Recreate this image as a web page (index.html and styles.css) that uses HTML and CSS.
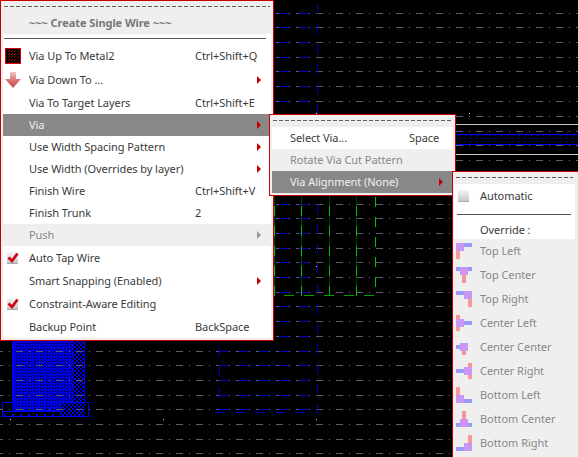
FILE: index.html
```html
<!DOCTYPE html>
<html lang="en">
<head>
<meta charset="utf-8">
<title>Create Single Wire menu</title>
<link rel="stylesheet" href="styles.css">
</head>
<body>
<svg class="canvas" width="578" height="457" viewBox="0 0 578 457" shape-rendering="crispEdges">
  <defs>
    <pattern id="dense" width="3" height="3" patternUnits="userSpaceOnUse">
      <rect width="3" height="3" fill="#0000e8"/>
      <rect x="1" y="1" width="1" height="1" fill="#000"/>
      <rect x="2" y="0" width="1" height="1" fill="#000060"/>
    </pattern>
    <pattern id="hatch" width="4" height="4" patternUnits="userSpaceOnUse">
      <rect width="4" height="4" fill="#000"/>
      <rect x="0" y="0" width="2" height="2" fill="#0000e0"/>
      <rect x="2" y="2" width="2" height="2" fill="#0000e0"/>
    </pattern>
    <pattern id="band" width="6" height="6" patternUnits="userSpaceOnUse">
      <rect width="6" height="6" fill="#000"/>
      <rect x="0" y="0" width="1" height="1" fill="#0000ff"/>
      <rect x="3" y="3" width="1" height="1" fill="#0000ff"/>
      <rect x="3" y="0" width="1" height="1" fill="#0000a0"/>
    </pattern>
  </defs>

  <!-- metal block, lower left -->
  <rect x="12" y="340" width="61" height="71" fill="url(#dense)"/>
  <rect x="73" y="340" width="12" height="62" fill="url(#hatch)"/>
  <rect x="60" y="402" width="25" height="15" fill="url(#hatch)"/>
  <path class="blue-solid" d="M12.500 340V402M13.500 340V402M84.500 340V402M60.500 340V417M3 402.500H88M3 416.500H88M2.500 402V417M88.500 402V417M3 411.500H60"/>
  <path class="blue-dots" d="M4 414.500H60"/>

  <!-- routing band, right -->
  <rect x="276" y="134" width="302" height="11" fill="url(#band)"/>
  <path class="band-edge" d="M276 134.500H578M276 144.500H578"/>
  <path class="band-rail" d="M276 124.500H578M276 154.500H578"/>

  <!-- grid -->
  <path class="grid-dash" d="M-4 13.500H578M-4 27.500H578M-4 42.500H578M-4 57.500H578M-4 71.500H578M-4 86.500H578M-4 101.500H578M-4 116.500H578M-4 131.500H578M-4 145.500H578M-4 160.500H578M-4 175.500H578M-4 189.500H578M-4 204.500H578M-4 218.500H578M-4 233.500H578M-4 248.500H578M-4 262.500H578M-4 277.500H578M-4 292.500H578M-4 306.500H578M-4 321.500H578M-4 336.500H578M-4 351.500H578M-4 365.500H578M-4 380.500H578M-4 395.500H578M-4 409.500H578M-4 424.500H578M-4 439.500H578M-4 453.500H578"/>
  <path class="grid-dot" d="M9 13.500H578M9 27.500H578M9 42.500H578M9 57.500H578M9 71.500H578M9 86.500H578M9 101.500H578M9 116.500H578M9 131.500H578M9 145.500H578M9 160.500H578M9 175.500H578M9 189.500H578M9 204.500H578M9 218.500H578M9 233.500H578M9 248.500H578M9 262.500H578M9 277.500H578M9 292.500H578M9 306.500H578M9 321.500H578M9 336.500H578M9 351.500H578M9 365.500H578M9 380.500H578M9 395.500H578M9 409.500H578M9 424.500H578M9 439.500H578M9 453.500H578"/>

  <!-- blue wires, upper and centre -->
  <path class="wire-h" d="M279 13.500H309M279 27.500H309M279 42.500H309M279 57.500H309M279 71.500H309M279 86.500H309M279 101.500H309M279 204.500H309M279 218.500H309M279 233.500H309M279 248.500H309M279 262.500H309M279 277.500H309M279 292.500H309M279 306.500H309M279 321.500H309M279 336.500H309"/>
  <path class="wire-v" d="M317.500 4V114M317.500 204V334"/>

  <!-- blue outline, lower centre -->
  <path class="wire-h" d="M219 351.500H309M219 365.500H309M219 380.500H309M219 395.500H309M219 409.500H309"/>
  <path class="wire-v" d="M219.500 347V412M317.500 344V412"/>
  <path class="wire-h" d="M215 412.500H317"/>

  <!-- green wires -->
  <path class="green-dim" d="M274.500 196V296M301.500 196V296M329.500 196V296M356.500 196V296"/>
  <path class="green" d="M274.500 206V296M301.500 206V296M329.500 206V296M356.500 206V296M375.500 197V287"/>
  <path class="green-thin" d="M284 295.500H374"/>

  <!-- markers -->
  <path class="marker" d="M10 419.500h1M163 419.500h1M316 419.500h1M316 113.500h1M469 113.500h1M316 266.500h1"/>
</svg>

<div class="menu menu-main">
  <div class="tear"></div>
  <div class="row row-title"><span class="label">~~~ Create Single Wire ~~~</span></div>
  <div class="sep-row"><div class="sep"></div></div>
  <div class="row row-ico">
    <span class="slot">
      <svg width="16" height="16" viewBox="0 0 16 16" shape-rendering="crispEdges">
        <defs><pattern id="viadots" width="3" height="3" patternUnits="userSpaceOnUse"><rect width="3" height="3" fill="#000"/><rect width="1" height="1" fill="#c00000"/><rect x="1" y="2" width="1" height="1" fill="#800000"/></pattern></defs>
        <rect width="16" height="16" fill="#e00000"/><rect x="1" y="1" width="14" height="14" fill="url(#viadots)"/>
      </svg>
    </span>
    <span class="label">Via Up To Metal2</span><span class="key">Ctrl+Shift+Q</span>
  </div>
  <div class="row row-ico">
    <span class="slot">
      <svg width="16" height="16" viewBox="0 0 16 16">
        <defs><linearGradient id="down" x1="0" y1="0" x2="0" y2="1"><stop offset="0" stop-color="#eec4c4"/><stop offset="0.6" stop-color="#d86a6a"/><stop offset="1" stop-color="#c85050"/></linearGradient></defs>
        <path d="M5 0H11V7H16L8 16L0 7H5Z" fill="url(#down)"/>
      </svg>
    </span>
    <span class="label">Via Down To ...</span><span class="key"></span><span class="arrow"></span>
  </div>
  <div class="row"><span class="slot"></span><span class="label">Via To Target Layers</span><span class="key">Ctrl+Shift+E</span></div>
  <div class="row row-active"><span class="slot"></span><span class="label">Via</span><span class="key"></span><span class="arrow"></span></div>
  <div class="row"><span class="slot"></span><span class="label">Use Width Spacing Pattern</span><span class="key"></span><span class="arrow"></span></div>
  <div class="row"><span class="slot"></span><span class="label">Use Width (Overrides by layer)</span><span class="key"></span><span class="arrow"></span></div>
  <div class="row"><span class="slot"></span><span class="label">Finish Wire</span><span class="key">Ctrl+Shift+V</span></div>
  <div class="row"><span class="slot"></span><span class="label">Finish Trunk</span><span class="key">2</span></div>
  <div class="row row-off"><span class="slot"></span><span class="label">Push</span><span class="key"></span><span class="arrow"></span></div>
  <div class="row row-ico">
    <span class="slot"><span class="check"><svg width="12" height="12" viewBox="0 0 12 12"><path d="M1.500 5.500L5 9L10.500 1.500" fill="none" stroke="#d00010" stroke-width="2.600"/></svg></span></span>
    <span class="label">Auto Tap Wire</span>
  </div>
  <div class="row"><span class="slot"></span><span class="label">Smart Snapping (Enabled)</span><span class="key"></span><span class="arrow"></span></div>
  <div class="row row-ico">
    <span class="slot"><span class="check"><svg width="12" height="12" viewBox="0 0 12 12"><path d="M1.500 5.500L5 9L10.500 1.500" fill="none" stroke="#d00010" stroke-width="2.600"/></svg></span></span>
    <span class="label">Constraint-Aware Editing</span>
  </div>
  <div class="row"><span class="slot"></span><span class="label">Backup Point</span><span class="key">BackSpace</span></div>
</div>

<div class="menu menu-via">
  <div class="tear"></div>
  <div class="row"><span class="label">Select Via...</span><span class="key">Space</span></div>
  <div class="row row-off"><span class="label">Rotate Via Cut Pattern</span></div>
  <div class="row row-active"><span class="label">Via Alignment (None)</span><span class="key"></span><span class="arrow"></span></div>
</div>

<div class="menu menu-align">
  <div class="tear"></div>
  <div class="panel">
    <div class="row row-auto"><span class="slot"><span class="check check-plain"></span></span><span class="label">Automatic</span></div>
    <div class="sep-row sep-row-tall"><div class="sep"></div></div>
    <div class="row row-override"><span class="slot"></span><span class="label">Override :</span></div>
  </div>
  <div class="row row-off"><span class="slot"><svg width="16" height="16" shape-rendering="crispEdges"><rect class="a-blue" x="8" y="0" width="8" height="4"/><rect class="a-red" x="0" y="8" width="4" height="8"/><rect class="a-pur" x="0" y="0" width="8" height="8"/></svg></span><span class="label">Top Left</span></div>
  <div class="row row-off"><span class="slot"><svg width="16" height="16" shape-rendering="crispEdges"><rect class="a-blue" x="0" y="0" width="16" height="4"/><rect class="a-red" x="6" y="8" width="4" height="8"/><rect class="a-pur" x="4" y="0" width="8" height="8"/></svg></span><span class="label">Top Center</span></div>
  <div class="row row-off"><span class="slot"><svg width="16" height="16" shape-rendering="crispEdges"><rect class="a-blue" x="0" y="0" width="8" height="4"/><rect class="a-red" x="12" y="8" width="4" height="8"/><rect class="a-pur" x="8" y="0" width="8" height="8"/></svg></span><span class="label">Top Right</span></div>
  <div class="row row-off"><span class="slot"><svg width="16" height="16" shape-rendering="crispEdges"><rect class="a-red" x="0" y="0" width="4" height="16"/><rect class="a-blue" x="8" y="6" width="8" height="4"/><rect class="a-pur" x="0" y="4" width="8" height="8"/></svg></span><span class="label">Center Left</span></div>
  <div class="row row-off"><span class="slot"><svg width="16" height="16" shape-rendering="crispEdges"><rect class="a-blue" x="0" y="6" width="4" height="4"/><rect class="a-red" x="6" y="12" width="4" height="4"/><rect class="a-pur" x="4" y="4" width="8" height="8"/></svg></span><span class="label">Center Center</span></div>
  <div class="row row-off"><span class="slot"><svg width="16" height="16" shape-rendering="crispEdges"><rect class="a-red" x="12" y="0" width="4" height="16"/><rect class="a-blue" x="0" y="6" width="8" height="4"/><rect class="a-pur" x="8" y="4" width="8" height="8"/></svg></span><span class="label">Center Right</span></div>
  <div class="row row-off"><span class="slot"><svg width="16" height="16" shape-rendering="crispEdges"><rect class="a-red" x="0" y="0" width="4" height="8"/><rect class="a-blue" x="8" y="12" width="8" height="4"/><rect class="a-pur" x="0" y="8" width="8" height="8"/></svg></span><span class="label">Bottom Left</span></div>
  <div class="row row-off"><span class="slot"><svg width="16" height="16" shape-rendering="crispEdges"><rect class="a-red" x="6" y="0" width="4" height="8"/><rect class="a-blue" x="0" y="12" width="16" height="4"/><rect class="a-pur" x="4" y="8" width="8" height="8"/></svg></span><span class="label">Bottom Center</span></div>
  <div class="row row-off"><span class="slot"><svg width="16" height="16" shape-rendering="crispEdges"><rect class="a-red" x="12" y="0" width="4" height="8"/><rect class="a-blue" x="0" y="12" width="8" height="4"/><rect class="a-pur" x="8" y="8" width="8" height="8"/></svg></span><span class="label">Bottom Right</span></div>
</div>
</body>
</html>
```

FILE: styles.css
```css
html, body {
  margin: 0;
  width: 578px;
  height: 457px;
  overflow: hidden;
  background: #000;
}

body {
  position: relative;
  font-family: "Noto Sans", "Open Sans", sans-serif;
  font-size: 11px;
  letter-spacing: -0.06px;
  color: #3a3a3a;
}

/* layout canvas */
.canvas {
  position: absolute;
  left: 0;
  top: 0;
  display: block;
}

.canvas path { fill: none; }

.grid-dash { stroke: #5a5a70; stroke-width: 1; stroke-dasharray: 7 13; }
.grid-dot { stroke: #777; stroke-width: 1; stroke-dasharray: 1 19; }
.wire-h { stroke: #0000c0; stroke-width: 1; stroke-dasharray: 10 10; }
.wire-v { stroke: #0000b0; stroke-width: 1; stroke-dasharray: 10 10; }
.blue-solid { stroke: #0000f8; stroke-width: 1; }
.blue-dots { stroke: #0000f0; stroke-width: 2; stroke-dasharray: 2 6; }
.band-edge { stroke: #0000ff; stroke-width: 1; }
.band-rail { stroke: #c8c8c8; stroke-width: 1; }
.green-dim { stroke: #004000; stroke-width: 1; }
.green { stroke: #00c000; stroke-width: 1; stroke-dasharray: 10 10; }
.green-thin { stroke: #00a000; stroke-width: 1; stroke-dasharray: 10 10; }
.marker { stroke: #d0d0d0; stroke-width: 1; }

/* popup menus */
.menu {
  position: absolute;
  box-sizing: border-box;
  display: flex;
  flex-direction: column;
  border: 1px solid #c80000;
  background: #efefef;
  padding: 0 2px;
}

.menu-main { left: 0; top: 0; width: 274px; height: 341px; }
.menu-via { left: 269px; top: 114px; width: 187px; height: 82px; padding: 0 3px 0 2px; }
.menu-align { left: 452px; top: 171px; width: 130px; height: 290px; padding: 0 6px 0 1px; z-index: 1; }

.tear {
  flex: none;
  height: 1px;
  margin: 5px 1px 5px;
  background: repeating-linear-gradient(90deg, #606060 0 4px, transparent 4px 6px);
}

.menu-via .tear { margin: 5px 1px 6px; }

.row {
  flex: none;
  box-sizing: border-box;
  display: flex;
  align-items: center;
  height: 22px;
  padding-bottom: 1px;
  background: #fff;
  white-space: nowrap;
}

.row-ico { height: 24px; }
.row-title { background: #efefef; color: #777; font-weight: 700; padding-left: 26px; }

.row-off { background: #efefef; color: #888; }
.row-active { background: #888; color: #f0f0f0; }

.slot {
  flex: none;
  width: 26px;
  padding-left: 2px;
  box-sizing: border-box;
  display: flex;
  align-items: center;
}

.label { flex: none; width: 166px; }
.key { flex: 1; }

.arrow {
  flex: none;
  width: 0;
  height: 0;
  margin-right: 10px;
  border-left: 4px solid #c00000;
  border-top: 4px solid transparent;
  border-bottom: 4px solid transparent;
}

.row-off .arrow { border-left-color: #999; }

.sep-row {
  flex: none;
  height: 10px;
  background: #fff;
  display: flex;
  align-items: flex-start;
}

.sep {
  flex: 1;
  height: 1px;
  margin: 4px 5px 0 1px;
  background: #555;
}

/* check boxes */
.check {
  width: 11px;
  height: 11px;
  margin-left: 2px;
  display: block;
  background: linear-gradient(#f4f4f4, #c8c8c8);
  box-shadow: 0 1px 0 #aaa;
}

.check svg { display: block; }

/* via submenu */
.menu-via .row { padding-left: 18px; }
.menu-via .label { width: 119px; }
.menu-via .arrow { margin-right: 9px; }

/* alignment submenu */
.panel {
  flex: none;
  background: #fff;
  display: flex;
  flex-direction: column;
}

.menu-align .tear { margin: 5px 2px 6px; }
.menu-align .label { width: auto; }
.row-auto { height: 24px; }
.row-override { height: 19px; }
.sep-row-tall { height: 12px; align-items: center; }
.sep-row-tall .sep { margin: 0 4px 0 3px; }
.menu-align .row-off { height: 24px; }
.check-plain { margin-left: 2px; }

.a-blue { fill: #9a9af4; }
.a-red { fill: #f49898; }
.a-pur { fill: #c898f4; }
```
